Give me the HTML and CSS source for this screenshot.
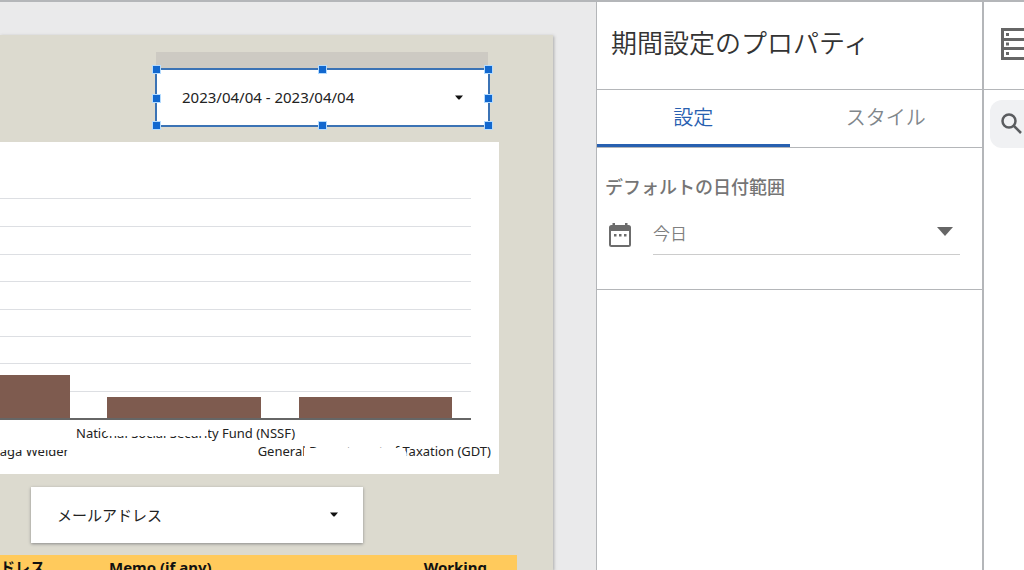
FILE: index.html
```html
<!DOCTYPE html>
<html lang="ja">
<head>
<meta charset="utf-8">
<title>期間設定のプロパティ</title>
<link rel="stylesheet" href="styles.css">
</head>
<body>
<div class="app">
  <main class="canvas">
    <div class="report">
      <div class="date-block">
        <div class="date-header"></div>
        <div class="selection">
          <button type="button" class="control">
            <span>2023/04/04 - 2023/04/04</span>
            <svg class="caret" viewBox="0 0 8 5" aria-hidden="true"><path d="M0 .5H8L4.8 4.2Q4 4.8 3.2 4.2Z"/></svg>
          </button>
          <i class="handle top left"></i><i class="handle top center"></i><i class="handle top right"></i>
          <i class="handle middle left"></i><i class="handle middle right"></i>
          <i class="handle bottom left"></i><i class="handle bottom center"></i><i class="handle bottom right"></i>
        </div>
      </div>
      <svg class="chart" viewBox="0 0 499 332" role="img" aria-label="棒グラフ">
        <path class="grid" d="M0 56.5H471M0 84.5H471M0 112.5H471M0 139.5H471M0 167.5H471M0 194.5H471M0 221.5H471M0 249.5H471"/>
        <path class="bars" d="M0 233H70V277H0ZM107 255H261V277H107ZM299 255H452V277H299Z"/>
        <path class="axis" d="M0 277H471"/>
        <text x="76" y="296">National Social Security Fund (NSSF)</text>
        <text x="69" y="314" text-anchor="end">naga Welder</text>
        <text x="491" y="314" text-anchor="end">General Department of Taxation (GDT)</text>
        <path class="cover" d="M110 283H208V294H107Q103 290 110 283ZM0 301H72V308H0ZM304 306H401Q409 309 406 316H331V318H304Z"/>
      </svg>
      <button type="button" class="control filter">
        <span>メールアドレス</span>
        <svg class="caret" viewBox="0 0 8 5" aria-hidden="true"><path d="M0 .5H8L4.8 4.2Q4 4.8 3.2 4.2Z"/></svg>
      </button>
      <table class="table">
        <thead><tr><th class="mail">ドレス</th><th>Memo (if any)</th><th class="number">Working</th></tr></thead>
      </table>
    </div>
  </main>
  <section class="panel">
    <h1 class="title">期間設定のプロパティ</h1>
    <div class="tabs" role="tablist">
      <button type="button" role="tab" class="tab active" aria-selected="true">設定</button>
      <button type="button" role="tab" class="tab" aria-selected="false">スタイル</button>
    </div>
    <div class="settings">
      <label class="label" for="range">デフォルトの日付範囲</label>
      <div class="field">
        <svg class="calendar" viewBox="0 0 22 24" aria-hidden="true">
          <path fill-rule="evenodd" d="M3.500 0H6V2H16V0H18.500V2H19.500Q22 2 22 4.500V21.500Q22 24 19.500 24H2.500Q0 24 0 21.500V4.500Q0 2 2.500 2H3.500ZM2 8V22H20V8Z"/>
          <path d="M5 11H7.500V13.500H5ZM10 11H12.500V13.500H10ZM15 11H17.500V13.500H15Z"/>
        </svg>
        <div class="select-box">
          <select class="select" id="range"><option>今日</option></select>
          <svg class="arrow" viewBox="0 0 16 9" aria-hidden="true"><path d="M0 0H16L8 9Z"/></svg>
        </div>
      </div>
    </div>
  </section>
  <aside class="data">
    <div class="data-head">
      <svg class="rows" viewBox="0 0 32 32" aria-hidden="true">
        <path fill-rule="evenodd" d="M0 0H32V32H0ZM3 3V10H29V3ZM3 13V19H29V13ZM3 22V29H29V22Z"/>
        <path d="M5 5H8V8H5ZM5 14.500H8V17.500H5ZM5 24H8V27H5Z"/>
      </svg>
    </div>
    <button type="button" class="search" aria-label="検索">
      <svg class="glass" viewBox="0 0 22 22" aria-hidden="true"><circle cx="8" cy="8" r="6.500"/><path d="M12.500 12.500L20 20"/></svg>
    </button>
  </aside>
</div>
</body>
</html>
```

FILE: styles.css
```css
* {
  box-sizing: border-box;
}

body {
  margin: 0;
  font-family: "Noto Sans", "Noto Sans CJK JP", sans-serif;
  color: #222;
}

button,
select {
  margin: 0;
  padding: 0;
  border: 0;
  background: none;
  font: inherit;
  color: inherit;
}

svg {
  display: block;
}

.app {
  display: flex;
  height: 100vh;
  overflow: hidden;
  border-top: 2px solid #b4b6b9;
  background: #fff;
}

.canvas {
  flex: 1;
  min-width: 0;
  padding: 33px 43px 0 0;
  background: #eaeaeb;
}

.report {
  height: 100%;
  padding-top: 17px;
  overflow: hidden;
  background: #dcdacf;
  box-shadow: 1px 1px 3px #aaa;
}

.date-block {
  margin: 0 63px 15px 155px;
}

.date-header {
  height: 16px;
  margin: 0 2px 0 1px;
  background: #cdcac3;
}

.selection {
  position: relative;
  border: 2px solid #3b73b5;
}

.control {
  display: flex;
  align-items: center;
  justify-content: space-between;
  width: 100%;
  height: 55px;
  padding: 0 25px 1px;
  background: #fff;
  font-size: 15px;
}

.caret {
  width: 8px;
  height: 5px;
  fill: #111;
}

.handle {
  position: absolute;
  width: 7px;
  height: 7px;
  background: #1268cf;
  box-shadow: 0 0 0 1px #b5dcff;
}

.top {
  top: -4px;
}

.middle {
  top: calc(50% - 3px);
}

.bottom {
  bottom: -4px;
}

.left {
  left: -4px;
}

.center {
  left: calc(50% - 4px);
}

.right {
  right: -4px;
}

.chart {
  width: calc(100% - 54px);
  background: #fff;
  font-size: 13px;
}

.chart text {
  fill: #222;
}

.grid {
  stroke: #dddfe3;
}

.bars {
  fill: #7e5b4f;
}

.axis {
  stroke: #666;
  stroke-width: 2;
}

.cover {
  fill: #fff;
}

.filter {
  width: auto;
  min-width: 332px;
  height: 56px;
  margin: 13px 0 12px 31px;
  padding: 0 25px 2px 26px;
  box-shadow: 0 1px 3px #888;
}

.table {
  width: calc(100% - 36px);
  border-collapse: collapse;
  background: #ffca5c;
  color: #111;
  font-size: 15px;
  line-height: 24px;
}

.table th {
  padding: 0;
  text-align: left;
}

.table .mail {
  width: 109px;
}

.table .number {
  padding-right: 30px;
  text-align: right;
}

.panel {
  width: 388px;
  border: solid #b4b6b9;
  border-width: 0 2px 0 1px;
  font-family: "Noto Sans CJK JP", sans-serif;
}

.title {
  margin: 0;
  padding: 21px 14px 28px;
  border-bottom: 1px solid #b4b6b9;
  color: #333;
  font-size: 26px;
  font-weight: 350;
  line-height: 38px;
}

.tabs {
  display: grid;
  grid-template-columns: 1fr 1fr;
  border-bottom: 1px solid #b4b6b9;
}

.tab {
  height: 57px;
  padding-bottom: 5px;
  color: #80868b;
  font-size: 20px;
  font-weight: 350;
}

.active {
  padding-bottom: 2px;
  border-bottom: 3px solid #2860b0;
  color: #2860b0;
}

.settings {
  padding: 25px 22px 34px 8px;
  border-bottom: 1px solid #b4b6b9;
}

.label {
  display: block;
  color: #757575;
  font-size: 18px;
  font-weight: 500;
  line-height: 26px;
}

.field {
  display: flex;
  align-items: center;
  gap: 22px;
  padding: 15px 0 0 4px;
}

.calendar {
  width: 22px;
  height: 24px;
  fill: #6c6c6c;
}

.select-box {
  display: grid;
  flex: 1;
  align-items: center;
  border-bottom: 1px solid #ccc;
}

.select,
.arrow {
  grid-area: 1 / 1;
}

.select {
  width: 100%;
  height: 40px;
  padding-bottom: 4px;
  appearance: none;
  color: #808080;
  font-size: 17px;
  font-weight: 350;
}

.arrow {
  width: 16px;
  height: 9px;
  margin: 0 7px 5px 0;
  justify-self: end;
  fill: #666;
  pointer-events: none;
}

.data {
  width: 40px;
  overflow: hidden;
}

.data-head {
  display: flex;
  align-items: center;
  height: 88px;
  padding: 0 0 4px 17px;
  border-bottom: 1px solid #b4b6b9;
}

.rows {
  flex: none;
  width: 32px;
  height: 32px;
  fill: #666;
}

.search {
  display: flex;
  align-items: center;
  width: 200px;
  height: 48px;
  margin: 10px 0 0 6px;
  padding-left: 11px;
  border-radius: 12px;
  background: #f0f1f3;
}

.glass {
  width: 22px;
  height: 22px;
  fill: none;
  stroke: #5a5c5f;
  stroke-width: 2.500;
}
```
